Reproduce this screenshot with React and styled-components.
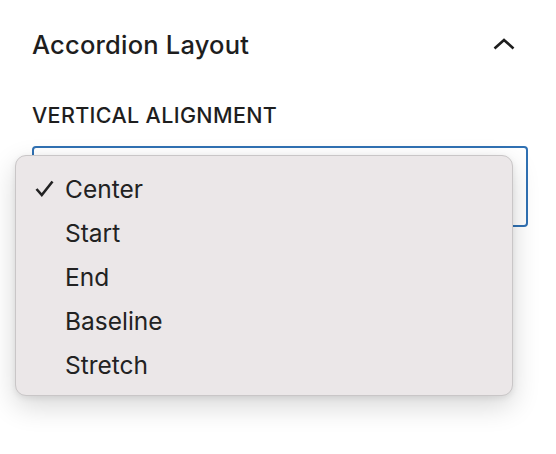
import React from "react";
import styled, { createGlobalStyle } from "styled-components";

const Global = createGlobalStyle`
  html, body { margin: 0; padding: 0; background: #ffffff; }
  body { font-family: Inter, "Noto Sans", "Liberation Sans", sans-serif; color: #1e1e1e; }
`;

const Panel = styled.div`
  width: 556px;
  height: 454px;
  box-sizing: border-box;
  padding: 0 28px 0 32px;
  display: flex;
  flex-direction: column;
`;

const Header = styled.div`
  height: 88px;
  display: flex;
  align-items: center;
  justify-content: space-between;
  padding-right: 13px;
`;

const Title = styled.h2`
  margin: 0;
  font-size: 25.5px;
  font-weight: 500;
  letter-spacing: 0.2px;
  color: #1e1e1e;
`;

const Label = styled.div`
  margin-top: 11px;
  font-size: 21.5px;
  font-weight: 500;
  letter-spacing: 0.35px;
  text-transform: uppercase;
  line-height: 32px;
  color: #1e1e1e;
`;

const SelectWrap = styled.div`
  position: relative;
  margin-top: 15px;
`;

const SelectBox = styled.div`
  height: 81px;
  box-sizing: border-box;
  border: 2px solid #3071b3;
  border-radius: 4px;
  background: #fff;
`;

const Menu = styled.ul`
  position: absolute;
  top: 9px;
  left: -17px;
  width: 498px;
  height: 241px;
  box-sizing: border-box;
  margin: 0;
  padding: 11px 0;
  list-style: none;
  background: #ebe7e8;
  border: 1px solid #c9c6c7;
  border-radius: 11px;
  box-shadow: 0 10px 28px rgba(0, 0, 0, 0.16), 0 2px 6px rgba(0, 0, 0, 0.08);
`;

const Item = styled.li`
  position: relative;
  height: 44px;
  display: flex;
  align-items: center;
  padding-left: 49px;
  font-size: 24.5px;
  font-weight: 400;
  color: #222;
`;

const Check = styled.svg`
  position: absolute;
  left: 19px;
  top: 13px;
`;

const options = ["Center", "Start", "End", "Baseline", "Stretch"];

export default function App() {
  return (
    <>
      <Global />
      <Panel>
        <Header>
          <Title>Accordion Layout</Title>
          <svg width="22" height="12" viewBox="0 0 22 12" fill="none">
            <path d="M1.5 10.5 L11 2 L20.5 10.5" stroke="#1e1e1e" strokeWidth="2.6" />
          </svg>
        </Header>
        <Label>Vertical Alignment</Label>
        <SelectWrap>
          <SelectBox />
          <Menu>
            {options.map((o, i) => (
              <Item key={o}>
                {i === 0 && (
                  <Check width="19" height="17" viewBox="0 0 19 17" fill="none">
                    <path d="M1.5 9 L6.8 15 L17.5 1.5" stroke="#222" strokeWidth="2.6" strokeLinejoin="miter" />
                  </Check>
                )}
                {o}
              </Item>
            ))}
          </Menu>
        </SelectWrap>
      </Panel>
    </>
  );
}
